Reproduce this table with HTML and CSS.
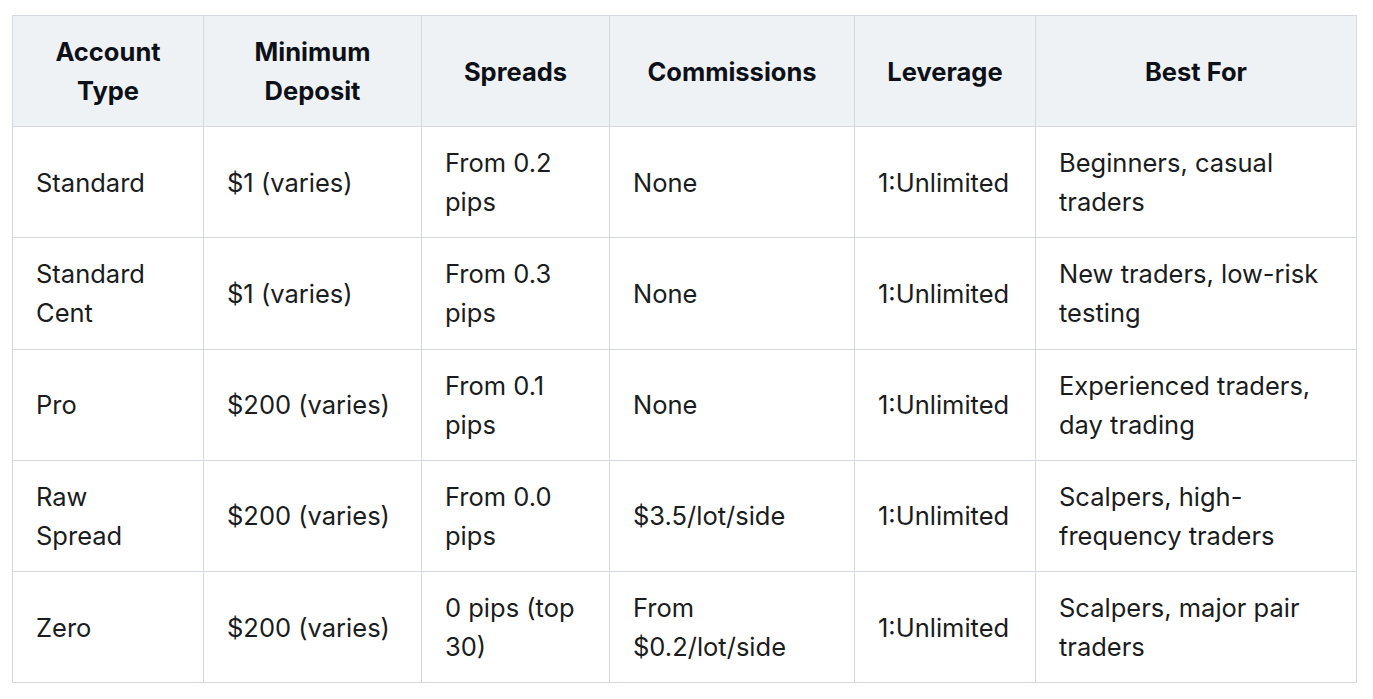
FILE: index.html
```html
<!DOCTYPE html>
<html lang="en">
<head>
<meta charset="utf-8">
<title>Account Types</title>
<link rel="stylesheet" href="styles.css">
</head>
<body>
<table class="accounts">
  <colgroup>
    <col class="c1"><col class="c2"><col class="c3"><col class="c4"><col class="c5"><col class="c6">
  </colgroup>
  <thead>
    <tr>
      <th>Account<br>Type</th>
      <th>Minimum<br>Deposit</th>
      <th>Spreads</th>
      <th>Commissions</th>
      <th>Leverage</th>
      <th>Best For</th>
    </tr>
  </thead>
  <tbody>
    <tr>
      <td>Standard</td>
      <td>$1 (varies)</td>
      <td>From 0.2<br>pips</td>
      <td>None</td>
      <td>1:Unlimited</td>
      <td>Beginners, casual<br>traders</td>
    </tr>
    <tr>
      <td>Standard<br>Cent</td>
      <td>$1 (varies)</td>
      <td>From 0.3<br>pips</td>
      <td>None</td>
      <td>1:Unlimited</td>
      <td>New traders, low-risk<br>testing</td>
    </tr>
    <tr>
      <td>Pro</td>
      <td>$200 (varies)</td>
      <td>From 0.1<br>pips</td>
      <td>None</td>
      <td>1:Unlimited</td>
      <td>Experienced traders,<br>day trading</td>
    </tr>
    <tr>
      <td>Raw<br>Spread</td>
      <td>$200 (varies)</td>
      <td>From 0.0<br>pips</td>
      <td>$3.5/lot/side</td>
      <td>1:Unlimited</td>
      <td>Scalpers, high-<br>frequency traders</td>
    </tr>
    <tr>
      <td>Zero</td>
      <td>$200 (varies)</td>
      <td>0 pips (top<br>30)</td>
      <td>From<br>$0.2/lot/side</td>
      <td>1:Unlimited</td>
      <td>Scalpers, major pair<br>traders</td>
    </tr>
  </tbody>
</table>
</body>
</html>
```
FILE: styles.css
```css
html, body {
  margin: 0;
  padding: 0;
  background: #ffffff;
}

body {
  padding: 15px 0 0 12px;
  font-family: Inter, "Noto Sans", sans-serif;
  color: #1a1c20;
}

.accounts {
  border-collapse: collapse;
  table-layout: fixed;
  width: 1344px;
  font-size: 25.5px;
  line-height: 39px;
}

.c1 { width: 191px; }
.c2 { width: 218px; }
.c3 { width: 188px; }
.c4 { width: 245px; }
.c5 { width: 181px; }
.c6 { width: 321px; }

.accounts th,
.accounts td {
  border: 1px solid #d5d9dd;
  padding: 16px 23px;
  height: 78.2px;
  vertical-align: middle;
  overflow: hidden;
  white-space: nowrap;
}

.accounts th {
  background: #eff2f4;
  font-weight: 700;
  text-align: center;
  color: #0d1117;
}

.accounts td {
  text-align: left;
  font-weight: 400;
}
```
